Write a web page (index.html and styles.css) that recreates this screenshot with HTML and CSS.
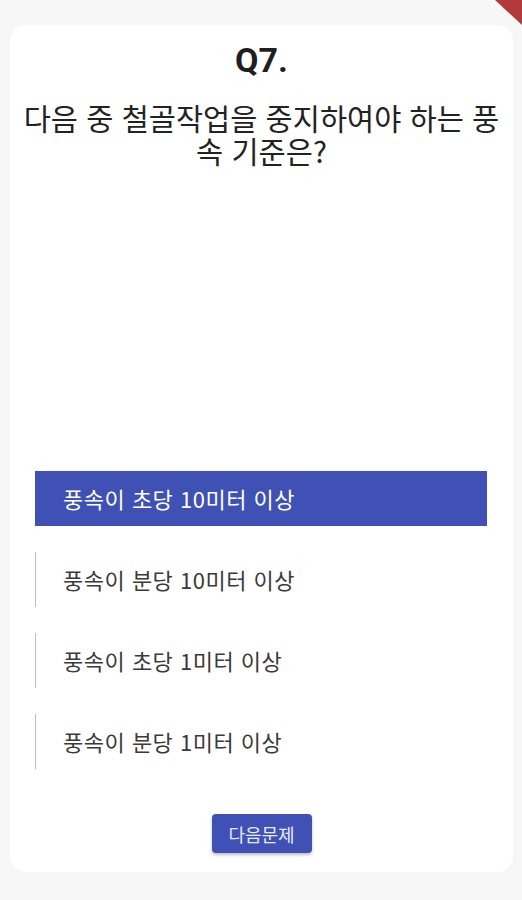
FILE: index.html
```html
<!DOCTYPE html>
<html lang="ko">
	<head>
		<meta charset="UTF-8" />
		<title>Quiz</title>
		<link rel="stylesheet" href="styles.css">
	</head>
	<body>
		<div class="debugBanner"></div>
		<div class="page">
			<div class="card">
				<div class="header">
					<div class="questionNo">Q7.</div>
					<div class="questionText">다음 중 철골작업을 중지하여야 하는 풍속 기준은?</div>
				</div>
				<div class="spacer"></div>
				<div class="options">
					<div class="option selected">풍속이 초당 10미터 이상</div>
					<div class="option">풍속이 분당 10미터 이상</div>
					<div class="option">풍속이 초당 1미터 이상</div>
					<div class="option">풍속이 분당 1미터 이상</div>
				</div>
				<div class="controlButtons">
					<button class="nextButton" type="button">다음문제</button>
				</div>
			</div>
		</div>
	</body>
</html>
```

FILE: styles.css
```css
html, body {
	margin: 0px;
	padding: 0px;
	background: #f7f7f7;
	font-family: "Noto Sans CJK KR", "Noto Sans", sans-serif;
}
.page {
	padding: 25px 9px 28px 10px;
}
.card {
	display: flex;
	flex-direction: column;
	height: 847px;
	box-sizing: border-box;
	background: #ffffff;
	border-radius: 16px;
	padding: 15px 0px 19px 0px;
}
.header {
	padding: 0px 10px;
	text-align: center;
	color: #1f1f1f;
}
.questionNo {
	font-family: Roboto, "Noto Sans CJK KR", sans-serif;
	font-weight: bold;
	font-size: 34px;
	line-height: 40px;
}
.questionText {
	margin-top: 21px;
	font-size: 29.5px;
	line-height: 33px;
	color: #222222;
}
.spacer {
	flex: 1;
}
.options {
	display: flex;
	flex-direction: column;
	gap: 26px;
	margin: 0px 26px 0px 25px;
}
.option {
	height: 55px;
	line-height: 55px;
	padding-left: 27px;
	font-size: 22px;
	letter-spacing: 0.5px;
	color: #3a3a3a;
	border-left: 1px solid #b6badd;
}
.option.selected {
	background: #3f51b5;
	color: #ffffff;
	border-left: 1px solid #3f51b5;
}
.controlButtons {
	margin-top: 45px;
	text-align: center;
}
.nextButton {
	width: 100px;
	height: 39px;
	border: none;
	border-radius: 4px;
	background: #3f51b5;
	color: #e8eaf6;
	font-family: "Noto Sans CJK KR", sans-serif;
	font-size: 18px;
	box-shadow: 0px 2px 3px rgba(0, 0, 0, 0.25);
}
/* flutter debug ribbon, only its corner shows */
.debugBanner {
	position: absolute;
	top: 0px;
	right: 0px;
	width: 27px;
	height: 25px;
	background: #b23a3a;
	clip-path: polygon(0 0, 100% 0, 100% 100%);
}
```
